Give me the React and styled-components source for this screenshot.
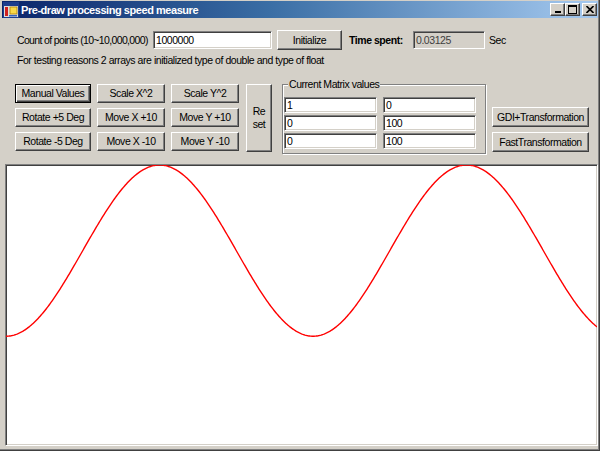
import React from 'react';
import styled, { createGlobalStyle, css } from 'styled-components';

const GlobalStyle = createGlobalStyle`
  html, body {
    margin: 0;
    padding: 0;
    background: #d4d0c8;
  }
  body {
    font-family: "Liberation Sans", Arial, sans-serif;
    font-size: 10.5px;
    letter-spacing: -0.45px;
    color: #000;
  }
`;

const raised = css`
  background: #d4d0c8;
  border: 1px solid;
  border-color: #fff #404040 #404040 #fff;
  box-shadow: inset -1px -1px #808080;
`;

const sunken = css`
  border: 1px solid;
  border-color: #808080 #fff #fff #808080;
  box-shadow: inset 1px 1px #404040, inset -1px -1px #d4d0c8;
`;

const Window = styled.div`
  width: 600px;
  height: 451px;
  box-sizing: border-box;
  background: #d4d0c8;
  display: flex;
  flex-direction: column;
  padding: 1px 2px 5px 2px;
  box-shadow: inset -1px -1px #404040, inset -2px -2px #808080;
`;

const TitleBar = styled.div`
  height: 17px;
  display: flex;
  align-items: center;
  background: linear-gradient(to right, #0a246a 0%, #3a6ea5 45%, #a6caf0 100%);
  padding: 0 1px 0 1px;
`;

const TitleText = styled.span`
  flex: 1;
  color: #fff;
  font-weight: bold;
  font-size: 11px;
  margin-left: 2px;
  letter-spacing: -0.45px;
`;

const CaptionButtons = styled.div`
  display: flex;
`;

const CaptionButton = styled.div`
  ${raised};
  box-sizing: border-box;
  width: 15px;
  height: 13px;
  margin-left: ${p => (p.$gap ? '2px' : '0')};
  display: flex;
  align-items: center;
  justify-content: center;
`;

const Content = styled.div`
  margin-left: 13px;
  display: flex;
  flex-direction: column;
`;

const TopRow = styled.div`
  display: flex;
  align-items: center;
  height: 20px;
  margin-top: 12px;
`;

const Label = styled.span`
  box-sizing: border-box;
  width: ${p => p.$w}px;
  margin-left: ${p => p.$ml || 0}px;
  padding-left: ${p => p.$pl || 0}px;
  font-weight: ${p => (p.$bold ? 'bold' : 'normal')};
  letter-spacing: ${p => p.$ls || -0.45}px;
  white-space: nowrap;
`;

const TextBox = styled.div`
  ${sunken};
  box-sizing: border-box;
  width: ${p => p.$w}px;
  height: ${p => p.$h || 18}px;
  background: ${p => (p.$readonly ? '#d4d0c8' : '#fff')};
  color: ${p => (p.$readonly ? '#404040' : '#000')};
  padding: 0 2px;
  display: flex;
  align-items: center;
`;

const Button = styled.div`
  ${raised};
  ${p =>
    p.$default &&
    css`
      border-color: #000;
      box-shadow: inset 1px 1px #fff, inset -1px -1px #404040, inset -2px -2px #808080;
    `}
  box-sizing: border-box;
  width: ${p => p.$w}px;
  height: ${p => p.$h || 19}px;
  margin-left: ${p => p.$ml || 0}px;
  display: flex;
  align-items: center;
  justify-content: center;
  text-align: center;
  white-space: nowrap;
  line-height: 13px;
`;

const InfoText = styled.div`
  margin-top: 4px;
  height: 13px;
  line-height: 13px;
  margin-left: 2px;
`;

const ControlsRow = styled.div`
  display: flex;
  align-items: flex-start;
  margin-top: 17px;
`;

const ButtonGrid = styled.div`
  display: grid;
  grid-template-columns: 76px 68px 68px;
  grid-auto-rows: 19px;
  column-gap: 6px;
  row-gap: 5px;
`;

const GroupBox = styled.div`
  position: relative;
  box-sizing: border-box;
  width: 204px;
  height: 70px;
  margin-left: 10px;
  border: 1px solid #808080;
  box-shadow: inset 1px 1px #fff, 1px 1px #fff;
  display: grid;
  grid-template-columns: 93px 93px;
  grid-auto-rows: 16px;
  column-gap: 6px;
  row-gap: 2px;
  padding: 12px 0 0 1px;
`;

const Legend = styled.span`
  position: absolute;
  top: -7px;
  left: 5px;
  padding: 0 1px;
  background: #d4d0c8;
  line-height: 13px;
`;

const SideButtons = styled.div`
  display: flex;
  flex-direction: column;
  gap: 5px;
  margin-left: 6px;
  margin-top: 23px;
`;

const Canvas = styled.div`
  ${sunken};
  flex: 1;
  margin: 10px 0 0 3px;
  background: #fff;
  overflow: hidden;
  svg {
    display: block;
  }
`;

const AppIcon = () => (
  <svg width="16" height="16" viewBox="0 0 16 16">
    <rect x="0.5" y="0.5" width="15" height="15" fill="#dcdcdc" stroke="#1c3c8c" />
    <rect x="1" y="1" width="14" height="3" fill="#1c3c8c" />
    <rect x="7" y="5" width="7" height="7" fill="#f8d848" stroke="#b08000" strokeWidth="0.8" />
    <rect x="2" y="5" width="3" height="9" fill="#d02020" />
    <rect x="6" y="13" width="8" height="1.5" fill="#3060c0" />
  </svg>
);

const MinIcon = () => (
  <svg width="8" height="7" viewBox="0 0 8 7">
    <rect x="1" y="5" width="6" height="2" fill="#000" />
  </svg>
);

const MaxIcon = () => (
  <svg width="9" height="9" viewBox="0 0 9 9">
    <rect x="0.5" y="0.5" width="8" height="8" fill="none" stroke="#000" />
    <rect x="0" y="0" width="9" height="2" fill="#000" />
  </svg>
);

const CloseIcon = () => (
  <svg width="8" height="7" viewBox="0 0 8 7">
    <path d="M0.5 0 L7.5 7 M7.5 0 L0.5 7" stroke="#000" strokeWidth="1.6" />
  </svg>
);

const W = 589;
const H = 278;

const buildWave = () => {
  const pts = [];
  for (let x = 0; x <= W; x += 1) {
    const y = 85 + 85 * Math.cos((2 * Math.PI * x) / 306);
    pts.push(`${x},${y.toFixed(2)}`);
  }
  return 'M' + pts.join(' L');
};

const gridButtons = [
  { text: 'Manual Values', def: true },
  { text: 'Scale X^2' },
  { text: 'Scale Y^2' },
  { text: 'Rotate +5 Deg' },
  { text: 'Move X +10' },
  { text: 'Move Y +10' },
  { text: 'Rotate -5 Deg' },
  { text: 'Move X -10' },
  { text: 'Move Y -10' },
];

const matrix = ['1', '0', '0', '100', '0', '100'];

const App = () => {
  const wave = buildWave();

  return (
    <>
      <GlobalStyle />
      <Window>
        <TitleBar>
          <AppIcon />
          <TitleText>Pre-draw processing speed measure</TitleText>
          <CaptionButtons>
            <CaptionButton><MinIcon /></CaptionButton>
            <CaptionButton><MaxIcon /></CaptionButton>
            <CaptionButton $gap><CloseIcon /></CaptionButton>
          </CaptionButtons>
        </TitleBar>

        <Content>
          <TopRow>
            <Label $w={138} $pl={2} $ls={-0.65}>Count of points (10~10,000,000)</Label>
            <TextBox $w={119}>1000000</TextBox>
            <Button $w={65} $h={20} $ml={5}>Initialize</Button>
            <Label $w={64} $ml={7} $bold>Time spent:</Label>
            <TextBox $w={72} $readonly>0.03125</TextBox>
            <Label $w={30} $ml={4}>Sec</Label>
          </TopRow>

          <InfoText>For testing reasons 2 arrays are initialized type of double and type of float</InfoText>

          <ControlsRow>
            <ButtonGrid>
              {gridButtons.map(b => (
                <Button key={b.text} $default={b.def}>{b.text}</Button>
              ))}
            </ButtonGrid>
            <Button $w={26} $h={68} $ml={7}>Re<br />set</Button>
            <GroupBox>
              <Legend>Current Matrix values</Legend>
              {matrix.map((v, i) => (
                <TextBox key={i} $w={93} $h={16}>{v}</TextBox>
              ))}
            </GroupBox>
            <SideButtons>
              <Button $w={97} $h={20}>GDI+Transformation</Button>
              <Button $w={97} $h={20}>FastTransformation</Button>
            </SideButtons>
          </ControlsRow>
        </Content>

        <Canvas>
          <svg width="100%" height="100%" viewBox={`0 0 ${W} ${H}`} preserveAspectRatio="none">
            <path d={wave} fill="none" stroke="#ff0000" strokeWidth="1.4" />
          </svg>
        </Canvas>
      </Window>
    </>
  );
};

export default App;
